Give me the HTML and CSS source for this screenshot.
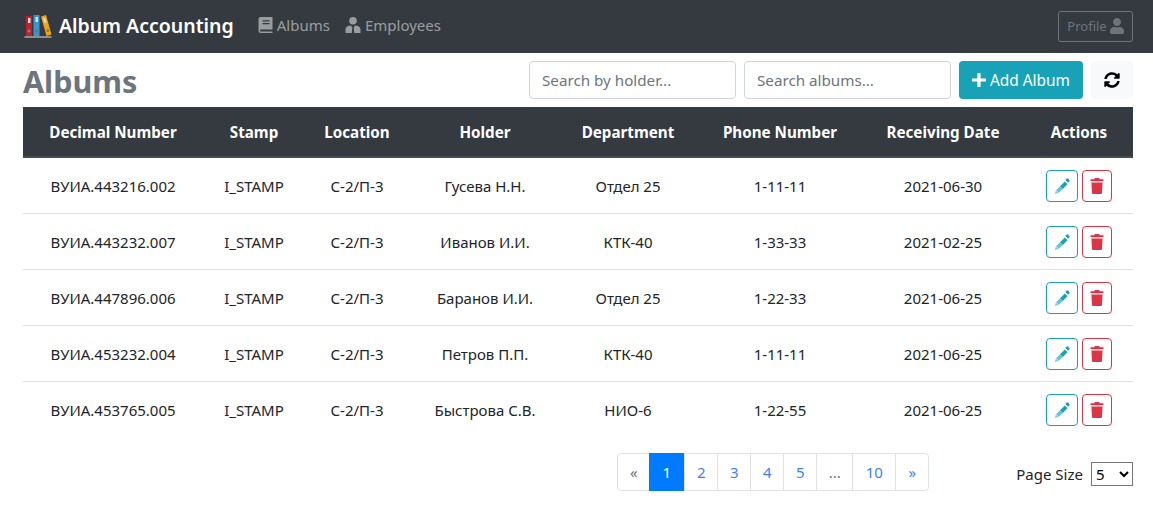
FILE: index.html
```html
<!DOCTYPE html>
<html lang="en">
<head>
    <meta charset="UTF-8">
    <title>Album Accounting</title>
    <link rel="stylesheet" href="styles.css">
</head>
<body>
<svg class="sprite" width="0" height="0">
    <symbol id="i-user" viewBox="0 0 448 512"><path d="M224 256c70.7 0 128-57.300 128-128S294.700 0 224 0 96 57.300 96 128s57.300 128 128 128zm89.600 32h-16.700c-22.200 10.200-46.900 16-72.900 16s-50.600-5.800-72.900-16h-16.700C60.200 288 0 348.200 0 422.400V464c0 26.500 21.500 48 48 48h352c26.500 0 48-21.500 48-48v-41.600c0-74.200-60.200-134.400-134.400-134.400z"/></symbol>
    <symbol id="i-pencil" viewBox="0 0 16 16">
        <path d="M12.700 0.600a1 1 0 0 1 1.400 0l1.300 1.300a1 1 0 0 1 0 1.400l-1.400 1.400-2.700-2.700z"/>
        <path d="M10.800 3.500l2.700 2.700-4.700 4.700-2.700-2.700z"/>
        <path opacity=".65" d="M6.100 8.200l2.700 2.700-3.900 3.900-2.700-2.700z"/>
        <path opacity=".5" d="M2 12.300l2.700 2.700-4.100 1z"/>
    </symbol>
    <symbol id="i-trash" viewBox="0 0 14 16"><path d="M4.800 0h4.400l.5 1.300H13.500v2H.5v-2h3.800zM1.400 4.400h11.200l-.6 10.400A1.200 1.200 0 0 1 10.800 16H3.200A1.200 1.200 0 0 1 2 14.800z"/></symbol>
</svg>

<nav class="navbar">
    <a class="brand" href="#">
        <svg class="logo" viewBox="0 0 30 26" width="30" height="26">
            <rect x="1.500" y="23" width="27" height="2" fill="#8b8f93"/>
            <rect x="3" y="3" width="6" height="20" fill="#c0202a"/>
            <rect x="5" y="5" width="2.500" height="5" fill="#d9d9d9"/>
            <circle cx="6" cy="18" r="1.500" fill="#8a8a8a"/>
            <rect x="10.500" y="2" width="6" height="21" fill="#3c95cc"/>
            <rect x="12.500" y="4" width="2.500" height="5" fill="#d9d9d9"/>
            <circle cx="13.500" cy="18" r="1.500" fill="#70757a"/>
            <path d="M18 3.500l5-1.500 5.500 19.500-5 1.500z" fill="#f0a412"/>
            <path d="M20 5l2.200-.6 1.400 5-2.200.6z" fill="#d9d9d9"/>
            <circle cx="24.800" cy="17.500" r="1.500" fill="#8a7a50"/>
        </svg>
        <span>Album Accounting</span>
    </a>
    <a class="nav-link" href="#">
        <svg class="nav-icon" viewBox="0 0 14 16" width="15" height="16"><path d="M2.200 0H14v12.500H2.500a1 1 0 0 0 0 2H14V16H2.200A2.200 2.200 0 0 1 0 13.800V2.200A2.200 2.200 0 0 1 2.200 0zM4 3.200v1.300h7V3.200zm0 2.800v1.300h7V6z" fill-rule="evenodd"/></svg>
        Albums
    </a>
    <a class="nav-link" href="#">
        <svg class="nav-icon" viewBox="0 0 16 16" width="16" height="16"><circle cx="8" cy="3.800" r="3.800"/><path d="M0.500 16v-3.500C0.500 10 2.500 8.700 5.800 8.500L7.300 10.500 6.800 16zM15.500 16v-3.500c0-2.500-2-3.800-5.300-4L8.700 10.500l.5 5.500z"/></svg>
        Employees
    </a>
    <button class="profile-btn">Profile <svg class="btn-icon" width="14" height="16"><use href="#i-user"/></svg></button>
</nav>

<main class="page">
    <div class="toolbar">
        <h1>Albums</h1>
        <input class="search search-holder" type="text" placeholder="Search by holder...">
        <input class="search search-albums" type="text" placeholder="Search albums...">
        <button class="add-btn">
            <svg viewBox="0 0 14 14" width="14" height="14"><path d="M5.400 0h3.200v5.400H14v3.200H8.600V14H5.400V8.600H0V5.400h5.400z"/></svg>
            Add Album
        </button>
        <button class="refresh-btn">
            <svg viewBox="0 0 512 512" width="16" height="16"><path d="M370.700 133.300C339.500 104 298.900 88 255.800 88c-77.500.100-144.300 53.200-162.800 126.900-1.300 5.400-6.100 9.100-11.600 9.100H24.100c-7.500 0-13.200-6.800-11.800-14.200C34.100 94.100 136.100 8 256 8c65.700 0 125.400 25.800 169.500 67.900L461 40.400C476.100 25.300 502 36 502 57.400V192c0 13.300-10.700 24-24 24H343.400c-21.400 0-32.100-25.900-17-41zM32 296h134.600c21.400 0 32.100 25.900 17 41l-41.900 41.900c31.200 29.300 71.800 45.300 114.900 45.200 77.400-.100 144.300-53.100 162.800-126.800 1.300-5.400 6.100-9.100 11.600-9.100h57.300c7.500 0 13.200 6.800 11.800 14.200C478 417.900 376 504 256 504c-65.700 0-125.400-25.800-169.500-67.900L51 471.600C35.900 486.700 10 476 10 454.600V320c0-13.300 10.700-24 24-24z"/></svg>
        </button>
    </div>

    <table class="albums">
        <colgroup>
            <col class="c-number"><col class="c-stamp"><col class="c-location"><col class="c-holder">
            <col class="c-dept"><col class="c-phone"><col class="c-date"><col class="c-actions">
        </colgroup>
        <thead>
            <tr>
                <th>Decimal Number</th><th>Stamp</th><th>Location</th><th>Holder</th>
                <th>Department</th><th>Phone Number</th><th>Receiving Date</th><th class="actions">Actions</th>
            </tr>
        </thead>
        <tbody>
            <tr>
                <td>ВУИА.443216.002</td><td>I_STAMP</td><td>С-2/П-3</td><td>Гусева Н.Н.</td>
                <td>Отдел 25</td><td>1-11-11</td><td>2021-06-30</td>
                <td class="actions"><button class="edit"><svg width="16" height="16"><use href="#i-pencil"/></svg></button><button class="del"><svg width="14" height="16"><use href="#i-trash"/></svg></button></td>
            </tr>
            <tr>
                <td>ВУИА.443232.007</td><td>I_STAMP</td><td>С-2/П-3</td><td>Иванов И.И.</td>
                <td>КТК-40</td><td>1-33-33</td><td>2021-02-25</td>
                <td class="actions"><button class="edit"><svg width="16" height="16"><use href="#i-pencil"/></svg></button><button class="del"><svg width="14" height="16"><use href="#i-trash"/></svg></button></td>
            </tr>
            <tr>
                <td>ВУИА.447896.006</td><td>I_STAMP</td><td>С-2/П-3</td><td>Баранов И.И.</td>
                <td>Отдел 25</td><td>1-22-33</td><td>2021-06-25</td>
                <td class="actions"><button class="edit"><svg width="16" height="16"><use href="#i-pencil"/></svg></button><button class="del"><svg width="14" height="16"><use href="#i-trash"/></svg></button></td>
            </tr>
            <tr>
                <td>ВУИА.453232.004</td><td>I_STAMP</td><td>С-2/П-3</td><td>Петров П.П.</td>
                <td>КТК-40</td><td>1-11-11</td><td>2021-06-25</td>
                <td class="actions"><button class="edit"><svg width="16" height="16"><use href="#i-pencil"/></svg></button><button class="del"><svg width="14" height="16"><use href="#i-trash"/></svg></button></td>
            </tr>
            <tr>
                <td>ВУИА.453765.005</td><td>I_STAMP</td><td>С-2/П-3</td><td>Быстрова С.В.</td>
                <td>НИО-6</td><td>1-22-55</td><td>2021-06-25</td>
                <td class="actions"><button class="edit"><svg width="16" height="16"><use href="#i-pencil"/></svg></button><button class="del"><svg width="14" height="16"><use href="#i-trash"/></svg></button></td>
            </tr>
        </tbody>
    </table>

    <div class="footer-row">
        <ul class="pagination">
            <li class="muted">«</li>
            <li class="selected">1</li>
            <li>2</li>
            <li>3</li>
            <li>4</li>
            <li>5</li>
            <li class="muted dots">...</li>
            <li class="last-num">10</li>
            <li>»</li>
        </ul>
        <label class="page-size">Page Size
            <select><option>5</option><option>10</option></select>
        </label>
    </div>
</main>
</body>
</html>
```
FILE: styles.css
```css
*{
    margin: 0;
    padding: 0;
    box-sizing: border-box;
}
ul,ol{
    list-style: none;
}
a{
    text-decoration: none;
}
body{
    font-family: "Noto Sans", "Open Sans", sans-serif;
    font-size: 15px;
    color: #212529;
    background-color: #ffffff;
}
button,input,select{
    font-family: inherit;
}
.sprite{
    display: block;
}
.navbar{
    height: 53px;
    background-color: #343a40;
    display: flex;
    align-items: center;
    padding: 0 20px 0 23px;
}
.brand{
    display: flex;
    align-items: center;
    gap: 6px;
    color: #ffffff;
    font-size: 19.5px;
    font-weight: 600;
    margin-right: 24px;
    padding-bottom: 2px;
}
.nav-link{
    display: flex;
    align-items: center;
    gap: 4px;
    color: rgba(255,255,255,.5);
    font-size: 15px;
    margin-right: 15px;
    padding-bottom: 4px;
}
.nav-icon{
    fill: rgba(255,255,255,.5);
}
.profile-btn{
    margin-left: auto;
    width: 75px;
    height: 31px;
    background: transparent;
    border: 1px solid #6c757d;
    border-radius: 3px;
    color: #6c757d;
    font-size: 13px;
    display: flex;
    align-items: center;
    justify-content: center;
    gap: 3px;
    padding-bottom: 2px;
}
.btn-icon{
    fill: #6c757d;
}
.page{
    padding: 0 20px 0 23px;
}
.toolbar{
    height: 54px;
    display: flex;
    align-items: center;
    gap: 8px;
}
.toolbar h1{
    font-size: 30.5px;
    font-weight: 700;
    color: #6c757d;
    margin-right: auto;
    padding-top: 2px;
}
.search{
    height: 38px;
    width: 207px;
    padding: 0 12px;
    border: 1px solid #ced4da;
    border-radius: 4px;
    font-size: 15.2px;
    color: #495057;
}
.search::placeholder{
    color: #6c757d;
    opacity: 1;
}
.add-btn{
    width: 124px;
    height: 38px;
    border: none;
    border-radius: 4px;
    background-color: #17a2b8;
    color: #ffffff;
    font-size: 15.4px;
    display: flex;
    align-items: center;
    justify-content: center;
    gap: 4px;
}
.add-btn svg{
    fill: #ffffff;
}
.refresh-btn{
    width: 42px;
    height: 38px;
    border: none;
    border-radius: 4px;
    background-color: #f8f9fa;
    display: flex;
    align-items: center;
    justify-content: center;
}
.albums{
    width: 1110px;
    border-collapse: collapse;
    table-layout: fixed;
    text-align: center;
}
.c-number{ width: 180px; }
.c-stamp{ width: 102px; }
.c-location{ width: 104px; }
.c-holder{ width: 152px; }
.c-dept{ width: 134px; }
.c-phone{ width: 170px; }
.c-date{ width: 156px; }
.c-actions{ width: 112px; }
.albums th{
    height: 50px;
    background-color: #343a40;
    color: #ffffff;
    font-size: 15.2px;
    font-weight: 700;
    border-bottom: 2px solid #454d55;
}
.albums td{
    height: 56px;
    padding-top: 2px;
    border-bottom: 1px solid #dee2e6;
}
.albums tbody tr:last-child td{
    border-bottom: none;
}
.albums .actions{
    padding-left: 4px;
}
.actions button{
    height: 32px;
    background: #ffffff;
    border-radius: 4px;
    border: 1px solid;
    vertical-align: middle;
    display: inline-flex;
    align-items: center;
    justify-content: center;
}
.edit{
    width: 32px;
    border-color: #17a2b8 !important;
    fill: #17a2b8;
    margin-right: 4px;
}
.del{
    width: 30px;
    border-color: #dc3545 !important;
    fill: #dc3545;
}
.footer-row{
    display: flex;
    justify-content: flex-end;
    margin-top: 16px;
}
.pagination{
    display: flex;
    height: 38px;
    border: 1px solid #dee2e6;
    border-radius: 4px;
    margin-right: 87px;
}
.pagination li{
    width: 33px;
    display: flex;
    align-items: center;
    justify-content: center;
    color: #3a84f0;
    border-left: 1px solid #dee2e6;
    font-size: 15px;
}
.pagination li:first-child{
    border-left: none;
    width: 31px;
}
.pagination .selected{
    width: 35px;
    margin: -1px 0;
    background-color: #007bff;
    color: #ffffff;
    border-left: none;
}
.pagination .muted{
    color: #6c757d;
}
.pagination .dots{
    width: 36px;
}
.pagination .last-num{
    width: 43px;
}
.page-size{
    display: flex;
    align-items: center;
    gap: 8px;
    height: 24px;
    margin-top: 9px;
}
.page-size select{
    width: 42px;
    height: 24px;
    font-size: 15px;
    background: #ffffff;
}
```
